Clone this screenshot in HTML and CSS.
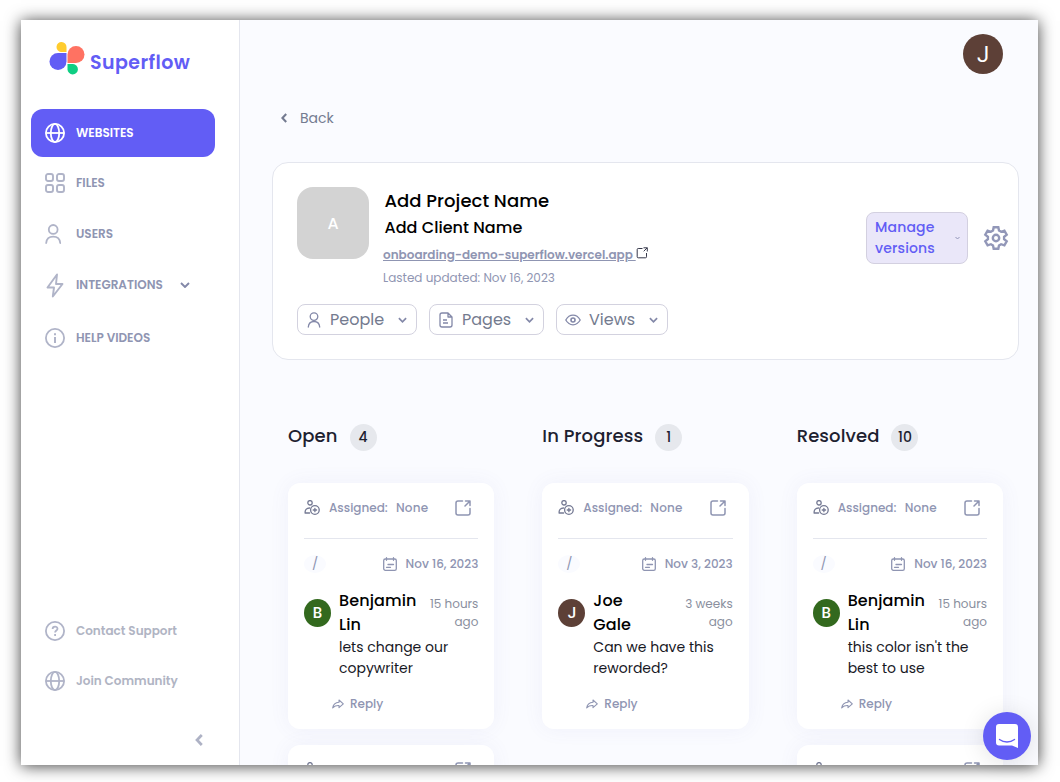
FILE: index.html
```html
<!DOCTYPE html>
<html lang="en">
<head>
<meta charset="utf-8">
<title>Superflow</title>
<link rel="stylesheet" href="styles.css">
</head>
<body>
<svg class="defs" width="0" height="0">
  <symbol id="globe" viewBox="0 0 20 20"><g fill="none" stroke="currentColor" stroke-width="1.8"><circle cx="10" cy="10" r="9.1"/><ellipse cx="10" cy="10" rx="4.2" ry="9.1"/><path d="M1 10h18"/></g></symbol>
  <symbol id="chev" viewBox="0 0 10 6"><path d="M1 1l4 4 4-4" fill="none" stroke="currentColor" stroke-width="1.9"/></symbol>
  <symbol id="assign" viewBox="0 0 16 16"><g fill="none" stroke="currentColor" stroke-width="1.3" stroke-linecap="round"><circle cx="6" cy="2.800" r="2.200"/><path d="M5.600 13H1.200C.7 10.200 2.500 8 5.600 8"/><circle cx="10.900" cy="10" r="4.300"/><path d="M10.900 8.300v3.400M9.200 10h3.400"/></g></symbol>
  <symbol id="open" viewBox="0 0 16 16"><g fill="none" stroke="currentColor" stroke-width="1.500" stroke-linecap="round" stroke-linejoin="round"><path d="M7.500 1H3a2 2 0 0 0-2 2v10a2 2 0 0 0 2 2h10a2 2 0 0 0 2-2V8.500M10.500 1H15v4.500M15 1l-5 5"/></g></symbol>
  <symbol id="cal" viewBox="0 0 14 14"><g fill="none" stroke="currentColor" stroke-width="1.300" stroke-linecap="round"><rect x=".700" y="2" width="12.600" height="11.300" rx="1.600"/><path d="M3.500 .7v2.600M10.500 .7v2.600M5 7.500h5.500M3.500 10.300h4"/></g></symbol>
  <symbol id="reply" viewBox="0 0 12 10"><path d="M7 1l4.300 3.800L7 8.600V6.500C4 6.300 2.300 7.200.7 8.800 1.200 5.500 3.500 3.400 7 3.200z" fill="none" stroke="currentColor" stroke-width="1.100" stroke-linejoin="round"/></symbol>
</svg>
<div class="app">
  <aside class="side">
    <div class="logo">
      <svg width="36" height="34" viewBox="0 0 36 34">
        <path d="M17.500 10H12a5 5 0 1 1 5.500-5z" fill="#ffcc2e"/>
        <path d="M17.500 11v8.500A8.500 8.500 0 1 1 9 11z" fill="#625df5"/>
        <path d="M18.500 21V12.500A8.500 8.500 0 1 1 27 21z" fill="#ff7262"/>
        <path d="M18.500 22H24a5.200 5.200 0 1 1-5.500 5.200z" fill="#0fce83"/>
      </svg>
      <span class="brand">Superflow</span>
    </div>
    <nav class="nav">
      <a class="item active"><svg class="i20"><use href="#globe"/></svg><span>WEBSITES</span></a>
      <a class="item h52"><svg class="i20" viewBox="0 0 20 20"><g fill="none" stroke="currentColor" stroke-width="1.900"><rect x="1" y="1" width="7" height="7" rx="2"/><rect x="12" y="1" width="7" height="7" rx="2"/><rect x="1" y="12" width="7" height="7" rx="2"/><rect x="12" y="12" width="7" height="7" rx="2"/></g></svg><span>FILES</span></a>
      <a class="item h50"><svg class="i20 user" viewBox="0 0 20 20"><g fill="none" stroke="currentColor" stroke-width="1.800" stroke-linecap="round"><circle cx="8.200" cy="5.400" r="4.400"/><path d="M1.200 19c.4-4.300 3.400-6.300 7-6.300s6.600 2 7 6.300"/></g></svg><span>USERS</span></a>
      <a class="item h52"><svg class="i20 bolt" viewBox="0 0 20 24"><path d="M12 1L2.500 14H9l-1.200 9L17.500 10.500H11z" fill="none" stroke="currentColor" stroke-width="1.900" stroke-linejoin="round"/></svg><span>INTEGRATIONS</span><svg class="nav-chev"><use href="#chev"/></svg></a>
      <a class="item h54"><svg class="i20" viewBox="0 0 20 20"><circle cx="10" cy="10" r="9.100" fill="none" stroke="currentColor" stroke-width="1.800"/><path d="M10 9v6M10 5.300v2" stroke="currentColor" stroke-width="2"/></svg><span>HELP VIDEOS</span></a>
    </nav>
    <div class="support">
      <a class="item soft"><svg class="i20" viewBox="0 0 20 20"><circle cx="10" cy="10" r="9.100" fill="none" stroke="currentColor" stroke-width="1.800"/><path d="M7.600 8c0-3.200 4.900-3.100 4.900-.3 0 1.900-2.400 1.700-2.400 3.800M10.100 13v1.900" fill="none" stroke="currentColor" stroke-width="1.800"/></svg><span>Contact Support</span></a>
      <a class="item soft"><svg class="i20"><use href="#globe"/></svg><span>Join Community</span></a>
    </div>
    <div class="collapse"><svg width="8" height="12" viewBox="0 0 8 12"><path d="M6.800 1L2 6l4.800 5" fill="none" stroke="#aeb2c5" stroke-width="2.700"/></svg></div>
  </aside>

  <main class="main">
    <header class="top"><div class="me">J</div></header>
    <div class="back"><svg width="6" height="10" viewBox="0 0 6 10"><path d="M5.200 1L1.400 5l3.800 4" fill="none" stroke="currentColor" stroke-width="2.100"/></svg><span>Back</span></div>

    <section class="project">
      <div class="info">
        <div class="thumb">A</div>
        <div class="meta">
          <h1>Add Project Name</h1>
          <h2>Add Client Name</h2>
          <div class="url"><span>onboarding-demo-superflow.vercel.app&nbsp;</span><svg width="12" height="12" viewBox="0 0 12 12"><path d="M6.500 1.500H2.200a1 1 0 0 0-1 1v7.300a1 1 0 0 0 1 1h7.300a1 1 0 0 0 1-1V6M7.500.8h3.800v3.700M11.200.8L7.700 4.300" fill="none" stroke="#36384a"/></svg></div>
          <p>Lasted updated: Nov 16, 2023</p>
        </div>
        <div class="actions">
          <button class="manage"><span>Manage<br>versions</span><svg width="5" height="4"><use href="#chev"/></svg></button>
          <svg width="26" height="26" viewBox="0 0 26 26" fill="none" stroke="#9297b8" stroke-width="2.400"><path d="M10.700 2.200h4.600l.7 3.400 2.100 1.200 3.300-1.100 2.300 4-2.600 2.200v2.200l2.600 2.200-2.300 4-3.300-1.100-2.100 1.200-.7 3.400h-4.600l-.7-3.400-2.100-1.200-3.300 1.100-2.300-4 2.600-2.200v-2.200L2.300 9.700l2.300-4 3.300 1.100L10 5.600z"/><circle cx="13" cy="13" r="3.200"/></svg>
        </div>
      </div>
      <div class="filters">
        <button class="filter people"><svg width="14" height="16" viewBox="0 0 14 16"><g fill="none" stroke="currentColor" stroke-width="1.300" stroke-linecap="round"><circle cx="7" cy="4.600" r="3.800"/><path d="M1.300 15c.3-3.700 2.600-5.500 5.700-5.500s5.400 1.800 5.700 5.500"/></g></svg><span>People</span><svg class="fchev"><use href="#chev"/></svg></button>
        <button class="filter pages"><svg width="14" height="16" viewBox="0 0 14 16"><path d="M9 1H3a2 2 0 0 0-2 2v10a2 2 0 0 0 2 2h8a2 2 0 0 0 2-2V5zM9 1v4h4M4 8h4M4 11h5" fill="none" stroke="currentColor" stroke-width="1.300" stroke-linejoin="round"/></svg><span>Pages</span><svg class="fchev"><use href="#chev"/></svg></button>
        <button class="filter views"><svg width="16" height="12" viewBox="0 0 16 12"><path d="M.8 6C2.500 3 5 1.200 8 1.200S13.500 3 15.200 6C13.500 9 11 10.800 8 10.800S2.500 9 .8 6z" fill="none" stroke="currentColor" stroke-width="1.300"/><circle cx="8" cy="6" r="2" fill="none" stroke="currentColor" stroke-width="1.600"/></svg><span>Views</span><svg class="fchev"><use href="#chev"/></svg></button>
      </div>
    </section>

    <section class="board">
      <div class="col">
        <div class="head"><h3>Open</h3><span class="count">4</span></div>
        <article class="card">
          <div class="assign"><svg class="i16 dark"><use href="#assign"/></svg><span class="as">Assigned:</span><span class="none">None</span><svg class="i16 ext"><use href="#open"/></svg></div>
          <div class="row"><span class="path">/</span><svg class="i14"><use href="#cal"/></svg><span>Nov 16, 2023</span></div>
          <div class="msg"><div class="av green">B</div><div class="body"><div class="who"><b>Benjamin<br>Lin</b><time>15 hours<br>ago</time></div><p>lets change our<br>copywriter</p></div></div>
          <div class="reply"><svg><use href="#reply"/></svg><span>Reply</span></div>
        </article>
        <article class="card"><div class="assign"><svg class="i16 dark"><use href="#assign"/></svg><span class="as">Assigned:</span><span class="none">None</span><svg class="i16 ext"><use href="#open"/></svg></div></article>
      </div>
      <div class="col">
        <div class="head"><h3>In Progress</h3><span class="count">1</span></div>
        <article class="card">
          <div class="assign"><svg class="i16 dark"><use href="#assign"/></svg><span class="as">Assigned:</span><span class="none">None</span><svg class="i16 ext"><use href="#open"/></svg></div>
          <div class="row"><span class="path">/</span><svg class="i14"><use href="#cal"/></svg><span>Nov 3, 2023</span></div>
          <div class="msg"><div class="av brown">J</div><div class="body"><div class="who"><b>Joe<br>Gale</b><time>3 weeks<br>ago</time></div><p>Can we have this<br>reworded?</p></div></div>
          <div class="reply"><svg><use href="#reply"/></svg><span>Reply</span></div>
        </article>
      </div>
      <div class="col">
        <div class="head"><h3>Resolved</h3><span class="count">10</span></div>
        <article class="card">
          <div class="assign"><svg class="i16 dark"><use href="#assign"/></svg><span class="as">Assigned:</span><span class="none">None</span><svg class="i16 ext"><use href="#open"/></svg></div>
          <div class="row"><span class="path">/</span><svg class="i14"><use href="#cal"/></svg><span>Nov 16, 2023</span></div>
          <div class="msg"><div class="av green">B</div><div class="body"><div class="who"><b>Benjamin<br>Lin</b><time>15 hours<br>ago</time></div><p>this color isn't the<br>best to use</p></div></div>
          <div class="reply"><svg><use href="#reply"/></svg><span>Reply</span></div>
        </article>
        <article class="card"><div class="assign"><svg class="i16 dark"><use href="#assign"/></svg><span class="as">Assigned:</span><span class="none">None</span><svg class="i16 ext"><use href="#open"/></svg></div></article>
      </div>
    </section>
  </main>
  <div class="chat"><svg width="22" height="24" viewBox="0 0 22 24"><path d="M3 0h16a3 3 0 0 1 3 3v21l-6-2.500H3a3 3 0 0 1-3-3V3a3 3 0 0 1 3-3z" fill="#fff"/><path d="M3.500 15.500c4.500 3.300 10.500 3.300 15 0" fill="none" stroke="#625df5" stroke-width="1.400" stroke-linecap="round"/></svg></div>
</div>
</body>
</html>
```
FILE: styles.css
```css
* { box-sizing: border-box; }
body { margin: 0; height: 782px; overflow: hidden; padding: 20px 22px 17px 21px; background: #fff; font-family: Poppins, Inter, sans-serif; color: #000; }
h1, h2, h3, p { margin: 0; font-weight: 500; }
svg { display: block; flex: none; }
span, h1, h2, h3, p, time, b { white-space: nowrap; }
button { font: inherit; margin: 0; }
.defs { position: absolute; }
.app { position: relative; display: flex; height: 745px; box-shadow: 0 1px 15px rgba(0,0,0,.75); }

.side { width: 219px; height: 745px; background: #fff; border-right: 1px solid #e4e6ee; display: flex; flex-direction: column; }
.logo { height: 89px; padding: 22px 0 0 28px; display: flex; align-items: flex-start; gap: 5px; }
.brand { font-weight: 600; font-size: 19px; line-height: 24px; color: #625df5; letter-spacing: .42px; padding-top: 9px; }
.nav { padding: 0 24px 0 10px; }
.item { display: flex; align-items: center; gap: 11px; height: 50px; padding-left: 14px; color: #b0b4c8; font-size: 12px; font-weight: 600; }
.item span { color: #8f95b2; }
.item.active { height: 48px; border-radius: 12px; background: #625df5; color: #fff; }
.item.active span { color: #fff; }
.item.soft span { color: #b0b4c3; }
.h52 { height: 52px; }
.h54 { height: 54px; }
.i20 { width: 20px; height: 20px; }
.bolt { height: 25px; }
.user { margin-bottom: 1px; }
.nav-chev { width: 10px; height: 6px; margin-left: 6px; color: #8388a8; }
.support { margin-top: 241px; padding-left: 10px; }
.collapse { padding: 28px 0 0 174px; }

.main { flex: 1; height: 745px; overflow: hidden; background: #fafbff; }
.top { height: 76px; padding: 14px 35px 0 0; display: flex; justify-content: flex-end; }
.me { width: 40px; height: 40px; border-radius: 50%; background: #5d4037; color: #fff; font-family: Roboto, sans-serif; font-size: 22px; line-height: 41px; text-align: center; }
.back { height: 44px; padding-left: 41px; display: flex; align-items: center; gap: 13px; color: #747b91; font-size: 14px; }
.project { margin: 22px 19px 0 32px; height: 198px; border: 1px solid #e4e6ee; border-radius: 16px; background: #fff; padding: 24px 9px 0 24px; }
.info { display: flex; height: 117px; }
.thumb { width: 72px; height: 72px; border-radius: 16px; background: #d3d3d3; color: #fff; font-size: 16px; font-weight: 500; line-height: 74px; text-align: center; }
.meta { padding-left: 14px; flex: 1; }
h1 { font-size: 18px; line-height: 28px; padding-left: 1.500px; letter-spacing: .05px; }
h2 { font-size: 16px; line-height: 26px; padding-left: 1.500px; letter-spacing: .05px; }
.url { display: flex; height: 26px; padding-top: 4px; font-size: 12px; line-height: 20px; font-weight: 600; color: #8f95b2; text-decoration: underline; }
.url svg { margin-top: 2px; }
.meta p { font-size: 12px; line-height: 21px; font-weight: 400; color: #8f95b2; }
.actions { display: flex; align-items: flex-start; gap: 15px; padding-top: 25px; }
.manage { width: 102px; height: 52px; border: 1px solid #d3d0e0; border-radius: 8px; background: #eae7f9; color: #625df5; font-size: 14px; font-weight: 500; letter-spacing: .15px; line-height: 21px; text-align: left; padding: 0 7px 0 8px; display: flex; justify-content: space-between; align-items: center; }
.manage svg { color: #8d91b5; }
.actions > svg { margin-top: 13px; }
.filters { display: flex; gap: 12px; }
.filter { height: 31px; border: 1px solid #d3d2df; border-radius: 8px; background: #fff; color: #8388a8; font-size: 16px; padding: 0 9px; display: flex; align-items: center; gap: 9px; }
.filter span { color: #747b8f; }
.people { width: 120px; }
.pages { width: 115px; }
.views { width: 112px; padding-left: 8px; gap: 8px; }
.fchev { width: 9px; height: 6px; margin-left: auto; }

.board { display: grid; grid-template-columns: repeat(3, 1fr); column-gap: 48px; padding: 63px 35px 0 48px; }
.col { display: flex; flex-direction: column; gap: 16px; }
.head { display: flex; height: 44px; gap: 12px; }
h3 { font-size: 18px; line-height: 26px; color: #1d2130; letter-spacing: .1px; }
.count { width: 27px; height: 27px; margin-top: 1px; border-radius: 50%; background: #e6e8ed; font-size: 14px; line-height: 27px; font-weight: 500; text-align: center; color: #1d2130; }
.card { height: 246px; border-radius: 12px; background: #fff; padding: 0 16px; box-shadow: 0 0 20px rgba(100,105,180,.07); }
.assign { height: 56px; padding-bottom: 6px; border-bottom: 1px solid #e4e6ee; display: flex; align-items: center; color: #8f95b2; font-size: 12px; font-weight: 500; }
.i16 { width: 16px; height: 16px; }
.dark { color: #747993; }
.as { width: 67px; margin-left: 9px; }
.none { letter-spacing: .2px; }
.ext { margin: 0 7px 0 auto; }
.row { height: 49px; display: flex; align-items: center; color: #8f95b2; font-size: 12px; font-weight: 500; }
.path { width: 22px; height: 18px; border-radius: 50%; background: #fafbff; line-height: 18px; font-weight: 400; font-size: 13px; text-align: center; }
.i14 { width: 14px; height: 14px; margin-left: auto; margin-right: 9px; }
.msg { display: flex; height: 92px; }
.av { width: 27px; height: 28px; margin-top: 11px; border-radius: 50%; color: #fff; font-family: Roboto, sans-serif; font-size: 15px; line-height: 29px; font-weight: 500; text-align: center; flex: none; }
.green { background: #33691e; }
.brown { background: #5d4037; }
.body { flex: 1; padding: 1px 0 0 8px; }
.who { display: flex; justify-content: space-between; height: 48px; }
.who b { font-size: 16px; line-height: 24px; font-weight: 500; letter-spacing: .1px; }
.who time { font-size: 12px; line-height: 18px; color: #8a8f9e; text-align: right; padding-top: 6px; }
.body p { font-size: 14px; line-height: 21px; font-weight: 400; color: #17181f; }
.reply { display: flex; align-items: center; gap: 6px; padding: 14px 0 0 28px; color: #8f95b2; font-size: 12px; line-height: 20px; font-weight: 500; }
.reply svg { width: 12px; height: 10px; }
.chat { position: absolute; right: 7px; bottom: 5px; width: 48px; height: 48px; border-radius: 50%; background: #625df5; display: flex; align-items: center; justify-content: center; box-shadow: 0 2px 24px rgba(0,0,0,.12); }
```
